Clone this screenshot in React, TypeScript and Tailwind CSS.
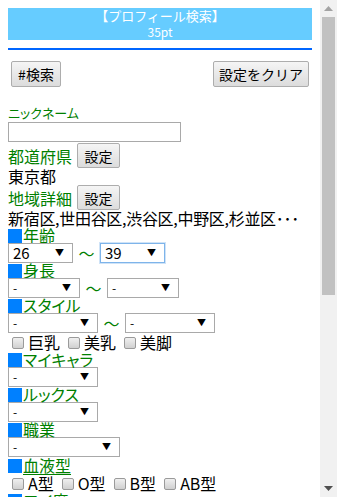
import React from 'react';

const jp = "font-['Noto_Sans_CJK_JP','Noto_Sans',sans-serif]";

function Btn({ label, className = '' }: { label: string; className?: string }) {
  return (
    <button
      className={`h-[25px] px-0 whitespace-nowrap border border-[#adadad] rounded-[2px] bg-gradient-to-b from-[#f5f5f5] to-[#dcdcdc] text-[14px] leading-[20px] text-black ${className}`}
    >
      {label}
    </button>
  );
}

function Select({ w, value = '-', focused = false }: { w: string; value?: string; focused?: boolean }) {
  return (
    <div
      className={`${w} h-[20px] flex items-center justify-between bg-white pl-[4px] pr-[8px] border ${
        focused ? 'border-[#7eb4ea] shadow-[0_0_0_1px_#cfe3f7]' : 'border-[#a9a9a9]'
      }`}
    >
      <span className={value === '-' ? 'text-[12px] leading-[14px]' : 'text-[15px] leading-[16px]'}>{value}</span>
      <span className="text-[9px] leading-[10px]">▼</span>
    </div>
  );
}

function Label({ text, underline = false }: { text: string; underline?: boolean }) {
  return (
    <div className="h-[15px] flex items-center overflow-visible">
      <span className="w-[14px] h-[14px] bg-[#0080ff] mr-[1px] shrink-0" />
      <span className={`text-[16px] leading-[15px] text-[#008000] [font-feature-settings:'palt'] ${underline ? 'underline underline-offset-2' : ''}`}>
        {text}
      </span>
    </div>
  );
}

function Range({ w1, w2, v1, v2, f2 }: { w1: string; w2: string; v1?: string; v2?: string; f2?: boolean }) {
  return (
    <div className="flex items-center h-[20px]">
      <Select w={w1} value={v1} />
      <span className="w-[27px] text-center text-[#008000] text-[16px] leading-[16px]">〜</span>
      <Select w={w2} value={v2} focused={f2} />
    </div>
  );
}

function Check({ label }: { label: string }) {
  return (
    <span className="inline-flex items-center mr-[4px]">
      <span className="w-[12px] h-[12px] ml-[4px] mr-[4px] rounded-[2px] border border-[#9a9a9a] bg-gradient-to-b from-[#f0f0f0] to-[#d0d0d0]" />
      <span className="text-[16px] leading-[19px]">{label}</span>
    </span>
  );
}

export default function App() {
  return (
    <div className={`${jp} flex w-[337px] h-[497px] overflow-hidden bg-white text-black`}>
      <div className="w-[320px] h-[497px] overflow-hidden px-[8px] pt-[8px]">
        <div className="h-[32px] bg-[#66ccff] text-white text-center">
          <div className="text-[13px] leading-[16px]">【プロフィール検索】</div>
          <div className="text-[12px] leading-[16px]">35pt</div>
        </div>
        <div className="mt-[8px] h-[2px] bg-[#0066ff]" />
        <div className="mt-[11px] px-[3px] flex justify-between">
          <Btn label="#検索" className="h-[26px] w-[50px]" />
          <Btn label="設定をクリア" className="h-[26px] w-[96px]" />
        </div>
        <div className="mt-[17px] h-[18px] text-[13px] leading-[18px] text-[#008000] [font-feature-settings:'palt']">ニックネーム</div>
        <div className="w-[173px] h-[20px] border border-[#a9a9a9] bg-white" />
        <div className="mt-[1px] h-[25px] flex items-center">
          <span className="text-[16px] leading-[18px] text-[#008000]">都道府県</span>
          <Btn label="設定" className="ml-[5px] w-[43px]" />
        </div>
        <div className="h-[17px] text-[16px] leading-[17px]">東京都</div>
        <div className="h-[25px] flex items-center">
          <span className="text-[16px] leading-[18px] text-[#008000]">地域詳細</span>
          <Btn label="設定" className="ml-[5px] w-[43px]" />
        </div>
        <div className="h-[17px] text-[16px] leading-[17px] whitespace-nowrap tracking-[-0.3px]">
          新宿区,世田谷区,渋谷区,中野区,杉並区･･･
        </div>
        <div className="h-[16px] flex items-end"><Label text="年齢" /></div>
        <Range w1="w-[65px]" w2="w-[65px]" v1="26" v2="39" f2 />
        <Label text="身長" />
        <Range w1="w-[72px]" w2="w-[72px]" />
        <Label text="スタイル" />
        <Range w1="w-[90px]" w2="w-[90px]" />
        <div className="h-[19px] flex items-center">
          <Check label="巨乳" />
          <Check label="美乳" />
          <Check label="美脚" />
        </div>
        <Label text="マイキャラ" />
        <Select w="w-[90px]" />
        <Label text="ルックス" />
        <Select w="w-[90px]" />
        <Label text="職業" />
        <Select w="w-[112px]" />
        <div className="h-[17px] flex items-center"><Label text="血液型" underline /></div>
        <div className="h-[19px] flex items-center">
          <Check label="A型" />
          <Check label="O型" />
          <Check label="B型" />
          <Check label="AB型" />
        </div>
        <Label text="エイ度" />
      </div>
      <div className="w-[17px] h-[497px] bg-[#f1f1f1] flex flex-col items-center">
        <div className="h-[17px] flex items-center justify-center">
          <svg width="9" height="5" viewBox="0 0 9 5"><path d="M0 5 L4.5 0 L9 5 Z" fill="#a3a3a3" /></svg>
        </div>
        <div className="w-[13px] h-[278px] bg-[#c1c1c1]" />
        <div className="flex-1" />
        <div className="h-[17px] flex items-center justify-center">
          <svg width="9" height="5" viewBox="0 0 9 5"><path d="M0 0 L9 0 L4.5 5 Z" fill="#505050" /></svg>
        </div>
      </div>
    </div>
  );
}
